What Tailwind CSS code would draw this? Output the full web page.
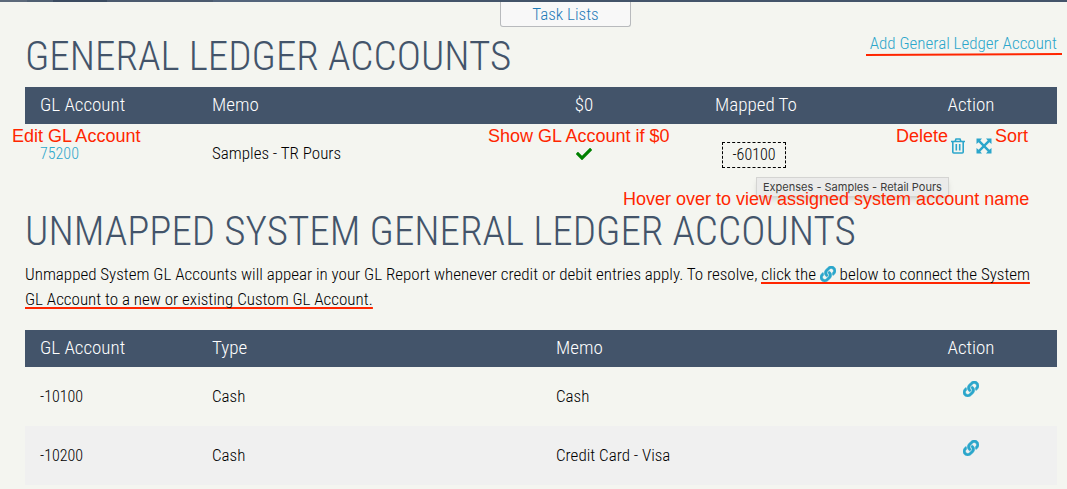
<!DOCTYPE html>
<html lang="en">
  <head>
    <meta charset="UTF-8" />
    <meta name="viewport" content="width=device-width, initial-scale=1.0" />
    <title>General Ledger Accounts</title>
    <script src="https://cdn.jsdelivr.net/npm/@tailwindcss/browser@4"></script>
  </head>
  <body class="relative min-h-screen overflow-x-hidden bg-[#f4f5f0] font-['Roboto_Condensed',Roboto,sans-serif] text-[17px] leading-6 font-[350] text-black">
    <!-- Shared icon -->
    <svg class="hidden">
      <symbol id="link" viewBox="0 0 512 512">
        <path fill="currentColor" stroke="currentColor" stroke-width="16" d="M326.612 185.391c59.747 59.809 58.927 155.698.36 214.59-.11.12-.24.25-.36.37l-67.2 67.2c-59.27 59.27-155.699 59.262-214.96 0-59.27-59.26-59.27-155.7 0-214.96l37.106-37.106c9.84-9.84 26.786-3.3 27.294 10.606.648 17.722 3.826 35.527 9.69 52.721 1.986 5.822.567 12.262-3.783 16.612l-13.087 13.087c-28.026 28.026-28.905 73.66-1.155 101.96 28.024 28.579 74.086 28.749 102.325.51l67.2-67.19c28.191-28.191 28.073-73.757 0-101.83-3.701-3.694-7.429-6.564-10.341-8.569a16.037 16.037 0 0 1-6.947-12.606c-.396-10.567 3.348-21.456 11.698-29.806l21.054-21.055c5.521-5.521 14.182-6.199 20.584-1.731a152.482 152.482 0 0 1 20.522 17.197zM467.547 44.449c-59.261-59.262-155.69-59.27-214.96 0l-67.2 67.2c-.12.12-.25.25-.36.37-58.566 58.892-59.387 154.781.36 214.59a152.454 152.454 0 0 0 20.521 17.196c6.402 4.468 15.064 3.789 20.584-1.731l21.054-21.055c8.35-8.35 12.094-19.239 11.698-29.806a16.037 16.037 0 0 0-6.947-12.606c-2.912-2.005-6.64-4.875-10.341-8.569-28.073-28.073-28.191-73.639 0-101.83l67.2-67.19c28.239-28.239 74.3-28.069 102.325.51 27.75 28.3 26.872 73.934-1.155 101.96l-13.087 13.087c-4.35 4.35-5.769 10.79-3.783 16.612 5.864 17.194 9.042 34.999 9.69 52.721.509 13.906 17.454 20.446 27.294 10.606l37.106-37.106c59.271-59.259 59.271-155.699.001-214.959z" />
      </symbol>
    </svg>

    <!-- Top bar -->
    <header class="flex h-[2px] bg-[#43546a]">
      <div class="w-1/40 bg-[#5c697a]"></div>
      <div class="w-1/40 bg-[#4f5f72]"></div>
      <div class="w-1/20 bg-[#3b4b60]"></div>
      <div class="w-1/10 bg-[#4b5a6e]"></div>
      <div class="w-1/10 bg-[#53647b]"></div>
    </header>

    <button type="button" class="absolute top-[2px] left-[500px] h-[25px] w-[131px] rounded-b-[3px] border border-t-0 border-[#b8babd] bg-[#f8f8f8] text-[17px] leading-[22px] text-[#1f7bb8]">Task Lists</button>

    <main class="pt-[31px] pr-[10px] pl-[25px]">
      <section>
        <div class="flex items-start justify-between">
          <h1 class="text-[41px] leading-[46px] font-[320] text-[#43546a]">GENERAL LEDGER ACCOUNTS</h1>
          <a href="#" class="relative leading-5 text-[#2ba6cb]">Add General Ledger Account
            <svg class="absolute top-[19px] -right-[5px] h-[4px] w-[196px]" viewBox="0 0 196 4"><path d="M0 3L196 2" stroke="#ff2600" stroke-width="2" /></svg>
          </a>
        </div>

        <table class="mt-2 w-full table-fixed text-left">
          <thead class="bg-[#43546a] text-[19px] leading-[21px] text-white">
            <tr>
              <th class="w-2/12 px-[15px] pt-[7px] pb-[9px] font-[320]">GL Account</th>
              <th class="w-4/12 px-[15px] pt-[7px] pb-[9px] font-[320]">Memo</th>
              <th class="w-1/12 px-[15px] pt-[7px] pb-[9px] text-center font-[320]">$0</th>
              <th class="w-3/12 px-[15px] pt-[7px] pb-[9px] text-center font-[320]">Mapped To</th>
              <th class="w-2/12 px-[15px] pt-[7px] pb-[9px] text-center font-[320]">Action</th>
            </tr>
          </thead>
          <tbody>
            <tr class="h-[59px]">
              <td class="relative px-[15px]">
                <a href="#" class="text-base text-[#2ba6cb]">75200</a>
                <span class="absolute top-0 -left-[13px] font-['Liberation_Sans',sans-serif] text-lg leading-6 font-normal whitespace-nowrap text-[#ff2600]">Edit GL Account</span>
              </td>
              <td class="px-[15px] pb-0.5">Samples - TR Pours</td>
              <td class="relative text-center">
                <span class="absolute top-0 -left-[53px] font-['Liberation_Sans',sans-serif] text-lg leading-6 font-normal whitespace-nowrap text-[#ff2600]">Show GL Account if $0</span>
                <svg class="mx-auto size-4" viewBox="0 0 512 512" fill="#008000"><path d="M173.898 439.404l-166.4-166.4c-9.997-9.997-9.997-26.206 0-36.204l36.203-36.204c9.997-9.998 26.207-9.998 36.204 0L192 312.69 432.095 72.596c9.997-9.997 26.207-9.997 36.204 0l36.203 36.204c9.997 9.997 9.997 26.206 0 36.204l-294.4 294.401c-9.998 9.997-26.207 9.997-36.204-.001z" /></svg>
              </td>
              <td class="relative pt-0.5 pr-1 text-center">
                <span class="inline-block w-16 border border-dashed border-black text-base">-60100</span>
                <!-- Tooltip -->
                <span class="absolute top-[53px] left-[129px] border border-[#d4d4d2] bg-[#ebebea] px-1.5 font-[Inter,sans-serif] text-[11px] leading-[18px] font-normal whitespace-nowrap text-[#3c3c3c] shadow-md">Expenses - Samples - Retail Pours</span>
                <span class="absolute top-[63px] -left-[4px] font-['Liberation_Sans',sans-serif] text-lg leading-6 font-normal whitespace-nowrap text-[#ff2600]">Hover over to view assigned system account name</span>
              </td>
              <td class="relative pt-[14px] align-top">
                <span class="absolute top-0 left-[11px] font-['Liberation_Sans',sans-serif] text-lg leading-6 font-normal text-[#ff2600]">Delete</span>
                <span class="absolute top-0 left-[110px] font-['Liberation_Sans',sans-serif] text-lg leading-6 font-normal text-[#ff2600]">Sort</span>
                <div class="flex justify-center gap-[10px] text-[#2ba6cb]">
                  <button type="button" aria-label="Delete">
                    <svg class="block size-4" viewBox="0 0 16 16" fill="none" stroke="currentColor" stroke-width="1.6"><path d="M1 3.500h14M5 3.500L6 1h4l1 2.500M2.800 3.500v10.500q0 1 1 1h8.400q1 0 1-1V3.500M6.300 6v6.500M9.700 6v6.500" /></svg>
                  </button>
                  <button type="button" aria-label="Sort">
                    <svg class="block size-4" viewBox="0 0 16 16" fill="currentColor"><path d="M.5.500h5.500L4.300 2.600 8 6.300l3.700-3.700L10 .500h5.500V6l-2.100-1.700L9.700 8l3.700 3.700 2.100-1.700v5.500H10l1.700-2.100L8 9.700l-3.700 3.700L6 15.500H.5V10l2.100 1.700L6.300 8 2.600 4.300.5 6z" /></svg>
                  </button>
                </div>
              </td>
            </tr>
          </tbody>
        </table>
      </section>

      <section class="mt-[25px]">
        <h2 class="text-[41px] leading-[46px] font-[320] text-[#43546a]">UNMAPPED SYSTEM GENERAL LEDGER ACCOUNTS</h2>
        <p class="mt-2 pr-2.5 leading-[25px]">Unmapped System GL Accounts will appear in your GL Report whenever credit or debit entries apply. To resolve, <span class="bg-[linear-gradient(#ff2600,#ff2600)] bg-[length:100%_2px] bg-bottom bg-no-repeat box-decoration-clone">click the <svg class="inline size-4 align-[-2px] text-[#2ba6cb]"><use href="#link" /></svg> below to connect the System GL Account to a new or existing Custom GL Account.</span></p>

        <table class="mt-[18px] w-full table-fixed text-left">
          <thead class="bg-[#43546a] text-[19px] leading-[21px] text-white">
            <tr>
              <th class="w-2/12 px-[15px] pt-[7px] pb-[9px] font-[320]">GL Account</th>
              <th class="w-4/12 px-[15px] pt-[7px] pb-[9px] font-[320]">Type</th>
              <th class="w-4/12 px-[15px] pt-[7px] pb-[9px] font-[320]">Memo</th>
              <th class="w-2/12 px-[15px] pt-[7px] pb-[9px] text-center font-[320]">Action</th>
            </tr>
          </thead>
          <tbody>
            <tr class="h-[59px]">
              <td class="px-[15px] text-base">-10100</td>
              <td class="px-[15px] pb-0.5">Cash</td>
              <td class="px-[15px] pb-0.5">Cash</td>
              <td class="pt-[14px] align-top">
                <button type="button" aria-label="Connect -10100" class="mx-auto block text-[#2ba6cb]"><svg class="block size-4"><use href="#link" /></svg></button>
              </td>
            </tr>
            <tr class="h-[59px] bg-[#f0f0f0]">
              <td class="px-[15px] text-base">-10200</td>
              <td class="px-[15px] pb-0.5">Cash</td>
              <td class="px-[15px] pb-0.5">Credit Card - Visa</td>
              <td class="pt-[14px] align-top">
                <button type="button" aria-label="Connect -10200" class="mx-auto block text-[#2ba6cb]"><svg class="block size-4"><use href="#link" /></svg></button>
              </td>
            </tr>
          </tbody>
        </table>
      </section>
    </main>
  </body>
</html>
